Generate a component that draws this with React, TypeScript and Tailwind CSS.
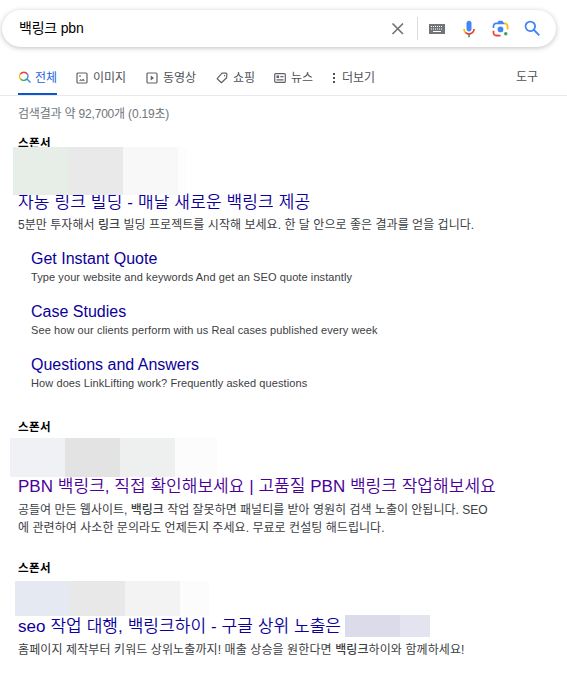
import type { ReactNode } from 'react';

interface MosaicProps {
  className: string;
  blocks: string[];
}

const sitelinks = [
  {
    title: 'Get Instant Quote',
    text: 'Type your website and keywords And get an SEO quote instantly',
  },
  {
    title: 'Case Studies',
    text: 'See how our clients perform with us Real cases published every week',
  },
  {
    title: 'Questions and Answers',
    text: 'How does LinkLifting work? Frequently asked questions',
  },
];

function Mosaic({ className, blocks }: MosaicProps) {
  return (
    <div className={`relative flex ${className}`}>
      {blocks.map((block) => (
        <div key={block} className={`h-full ${block}`} />
      ))}
    </div>
  );
}

function Sponsor() {
  return <div className="h-4 pt-px text-[11.5px] leading-4 font-bold tracking-[0.4px] text-black">스폰서</div>;
}

function Desc({ className = '', children }: { className?: string; children: ReactNode }) {
  return (
    <p className={`h-[18px] text-[12px] leading-[18px] text-[#3c4043] ${className}`}>{children}</p>
  );
}

function SearchBar() {
  return (
    <div className="mt-[10px] ml-[2px] flex h-[37px] w-[554px] items-center rounded-full bg-white pl-[17px] shadow-[0_1px_5px_rgba(32,33,36,0.28)]">
      <span className="w-[368px] text-[14px] tracking-[-0.2px] text-black">백링크 pbn</span>
      <svg className="ml-[1px] h-5 w-5" viewBox="0 0 20 20" fill="none" stroke="#70757a" strokeWidth="1.7">
        <path d="M4.5 4.5l10.5 10.5M15 4.5L4.5 15" />
      </svg>
      <div className="ml-[9px] h-[23px] w-px bg-[#dadce0]" />
      <svg className="ml-[11px] h-[10px] w-4" viewBox="0 0 16 10">
        <path d="M0 0h16v10H0z" fill="#70757a" />
        <path
          d="M2 2.5h12M2 5h12"
          stroke="#fff"
          strokeWidth="1"
          strokeDasharray="1 1"
        />
        <path d="M4 7.5h8" stroke="#fff" strokeWidth="1" />
      </svg>
      <svg className="ml-[14px] h-[20px] w-[20px]" viewBox="0 0 24 24">
        <path fill="#4285f4" d="M12 15c1.66 0 3-1.31 3-2.97V4.98C15 3.34 13.66 2 12 2S9 3.34 9 4.98v7.05C9 13.69 10.34 15 12 15z" />
        <path fill="#34a853" d="M11 18.08h2V22h-2z" />
        <path fill="#fbbc04" d="M7.05 16.87C5.78 15.59 5 13.86 5 12h2c0 1.35.56 2.52 1.46 3.39l-1.41 1.48z" />
        <path fill="#ea4335" d="M12 16.93c-1.41 0-2.63-.58-3.54-1.53l-1.41 1.43C8.35 18.16 10.06 19 12 19c3.87 0 7-3.13 7-7h-2c0 2.92-2.24 4.93-5 4.93z" />
      </svg>
      <svg className="ml-[11px] h-[21px] w-[21px]" viewBox="0 0 192 192">
        <circle fill="#34a853" cx="144.07" cy="144" r="16" />
        <circle fill="#4285f4" cx="96.07" cy="104" r="26" />
        <path fill="#ea4335" d="M24 135.2c0 18.11 14.69 32.8 32.8 32.8H96v-16l-40.1-.1c-8.8 0-15.9-8.19-15.9-17.9v-18H24v19.2z" />
        <path fill="#fbbc04" d="M168 72.8c0-18.11-14.69-32.8-32.8-32.8H116l20 16c8.8 0 16 8.29 16 18v30h16V72.8z" />
        <path fill="#4285f4" d="M112 24l-32 0L68 40H56.8C38.69 40 24 54.69 24 72.8V92h16V74c0-9.71 7.2-18 16-18h80l-12-16z" />
      </svg>
      <svg className="ml-[11px] h-[21px] w-[21px]" viewBox="0 0 24 24">
        <path
          fill="#4285f4"
          d="M20.49 19l-5.73-5.73C15.53 12.2 16 10.91 16 9.5A6.5 6.5 0 1 0 9.5 16c1.41 0 2.7-.47 3.77-1.24L19 20.49 20.49 19zM5 9.5C5 7.01 7.01 5 9.5 5S14 7.01 14 9.5 11.99 14 9.5 14 5 11.99 5 9.5z"
        />
      </svg>
    </div>
  );
}

function Tabs() {
  return (
    <nav className="mt-[19px] flex h-[30px] border-b border-[#e8eaed] text-[12px] leading-[24px] text-[#4d5156]">
      <div className="ml-[18px] flex h-[29px] w-[39px] border-b-2 border-[#0b57d0] text-[#1a63e0]">
        <svg className="mt-[5px] ml-[0.5px] h-3 w-3 shrink-0" viewBox="0 0 12 12" fill="none" strokeWidth="1.4">
          <path d="M1.8 8.2A4 4 0 0 1 1.4 3" stroke="#fbbc04" />
          <path d="M1.4 3a4.2 4.2 0 0 1 6.9 0" stroke="#ea4335" />
          <path d="M8.3 3a4.2 4.2 0 0 1-.4 5l3.6 3.5" stroke="#4285f4" />
          <path d="M7.9 8a4.2 4.2 0 0 1-6.1.2" stroke="#34a853" />
        </svg>
        <span className="ml-[4.5px]">전체</span>
      </div>
      <div className="ml-[19px] flex w-[70px]">
        <svg className="mt-[6px] h-3 w-3" viewBox="0 0 12 12" fill="none" stroke="#5f6368" strokeWidth="1.2">
          <rect x="1" y="1" width="10" height="10" rx="1" />
          <path d="M3 8.8h6L7.2 6.7 5.7 8.1l-1-1z" fill="#5f6368" stroke="none" />
          <path d="M3 4h2" />
        </svg>
        <span className="ml-[5px]">이미지</span>
      </div>
      <div className="flex w-[70px]">
        <svg className="mt-[6px] h-3 w-3" viewBox="0 0 12 12" fill="none" stroke="#5f6368" strokeWidth="1.2">
          <rect x="1" y="1" width="10" height="10" rx="1" />
          <path d="M4.7 3.6v4.8L8 6z" fill="#5f6368" stroke="none" />
        </svg>
        <span className="ml-[5px]">동영상</span>
      </div>
      <div className="flex w-[58px]">
        <svg className="mt-[6px] h-3 w-3" viewBox="0 0 12 12" fill="none" stroke="#5f6368" strokeWidth="1.2">
          <path d="M6 1.2h4.2l.7.8-.3 3.7-5.2 5-4.2-4z" strokeLinejoin="round" />
          <path d="M8 3.6h1.2" />
        </svg>
        <span className="ml-[5px]">쇼핑</span>
      </div>
      <div className="flex w-[57px]">
        <svg className="mt-[6px] h-3 w-3" viewBox="0 0 12 12" fill="none" stroke="#5f6368" strokeWidth="1.2">
          <rect x=".7" y="1.6" width="10.6" height="8.8" rx="1" />
          <path d="M2.5 4.2h2.6M2.5 5.4h2.6M6.3 4.6h3.2M2.5 7.8h7" />
        </svg>
        <span className="ml-[5px]">뉴스</span>
      </div>
      <div className="flex">
        <svg className="mt-[7px] h-[10px] w-[6px]" viewBox="0 0 6 10" fill="#4d5156">
          <path d="M2 0h2v2H2zM2 4h2v2H2zM2 8h2v2H2z" />
        </svg>
        <span className="ml-[5px]">더보기</span>
      </div>
      <span className="mr-[29px] ml-auto -mt-px">도구</span>
    </nav>
  );
}

export default function App() {
  return (
    <div className="flex h-[680px] w-[567px] flex-col overflow-hidden bg-white whitespace-nowrap font-['Liberation_Sans','Noto_Sans_CJK_KR',sans-serif]">
      <SearchBar />
      <Tabs />
      <main className="ml-[18px]">
        <p className="mt-[9px] h-[18px] text-[12px] leading-[18px] tracking-[-0.19px] text-[#70757a]">
          검색결과 약 92,700개 (0.19초)
        </p>

        <section className="mt-[11px]">
          <Sponsor />
          <Mosaic
            className="-mt-[3px] -ml-[5px] h-[48px] z-10"
            blocks={['w-[55px] bg-[#e7eee7]', 'w-[55px] bg-[#e9e9e9]', 'w-[55px] bg-[#f8f8f8]', 'w-[9px] bg-[#fdfdfd]']}
          />
          <h3 className="-mt-[4px] h-6 text-[17px] leading-6 font-[350] tracking-[0.14px] text-[#0d0099]">
            자동 링크 빌딩 - 매달 새로운 백링크 제공
          </h3>
          <Desc className="mt-[1px] tracking-[0.04px]">
            5분만 투자해서 <b className="font-medium">링크</b> 빌딩 프로젝트를 시작해 보세요. 한 달 안으로 좋은 결과를 얻을 겁니다.
          </Desc>
          <ul className="mt-[15px] ml-[13px]">
            {sitelinks.map((link) => (
              <li key={link.title} className="h-[53px]">
                <h4 className="h-5 text-[16px] leading-5 text-[#0d0099]">{link.title}</h4>
                <p className="-mt-px h-[18px] text-[11px] leading-[18px] tracking-[0.09px] text-[#3c4043]">
                  {link.text}
                </p>
              </li>
            ))}
          </ul>
        </section>

        <section className="mt-[10px]">
          <Sponsor />
          <Mosaic
            className="mt-[4px] -ml-[8px] h-[39px]"
            blocks={['w-[55px] bg-[#eff1f4]', 'w-[55px] bg-[#e3e3e3]', 'w-[55px] bg-[#edf0ef]', 'w-[42px] bg-[#fcfcfc]']}
          />
          <h3 className="-mt-[2px] h-6 text-[17px] leading-6 font-[350] tracking-[0.03px] text-[#4b0099]">
            PBN 백링크, 직접 확인해보세요 | 고품질 PBN 백링크 작업해보세요
          </h3>
          <Desc className="mt-[2px]">
            공들여 만든 웹사이트, <b className="font-medium">백링크</b> 작업 잘못하면 패널티를 받아 영원히 검색 노출이 안됩니다. SEO
          </Desc>
          <Desc className="tracking-[0.05px]">에 관련하여 사소한 문의라도 언제든지 주세요. 무료로 컨설팅 해드립니다.</Desc>
        </section>

        <section className="mt-[22px]">
          <Sponsor />
          <Mosaic
            className="mt-[6px] -ml-[3px] h-[35px]"
            blocks={['w-[55px] bg-[#e4e9f2]', 'w-[55px] bg-[#e8e8e8]', 'w-[55px] bg-[#f3f3f3]', 'w-[29px] bg-[#fcfcfc]']}
          />
          <div className="-mt-px flex h-6">
            <h3 className="w-[327px] text-[17px] leading-6 font-[350] tracking-[0.07px] text-[#0d0099]">
              seo 작업 대행, 백링크하이 - 구글 상위 노출은
            </h3>
            <Mosaic className="h-[22px]" blocks={['w-[55px] bg-[#dcdbec]', 'w-[30px] bg-[#e4e4f0]']} />
          </div>
          <Desc className="mt-[2px] tracking-[0.1px]">
            홈페이지 제작부터 키워드 상위노출까지! 매출 상승을 원한다면 <b className="font-medium">백링크</b>하이와 함께하세요!
          </Desc>
        </section>
      </main>
    </div>
  );
}
